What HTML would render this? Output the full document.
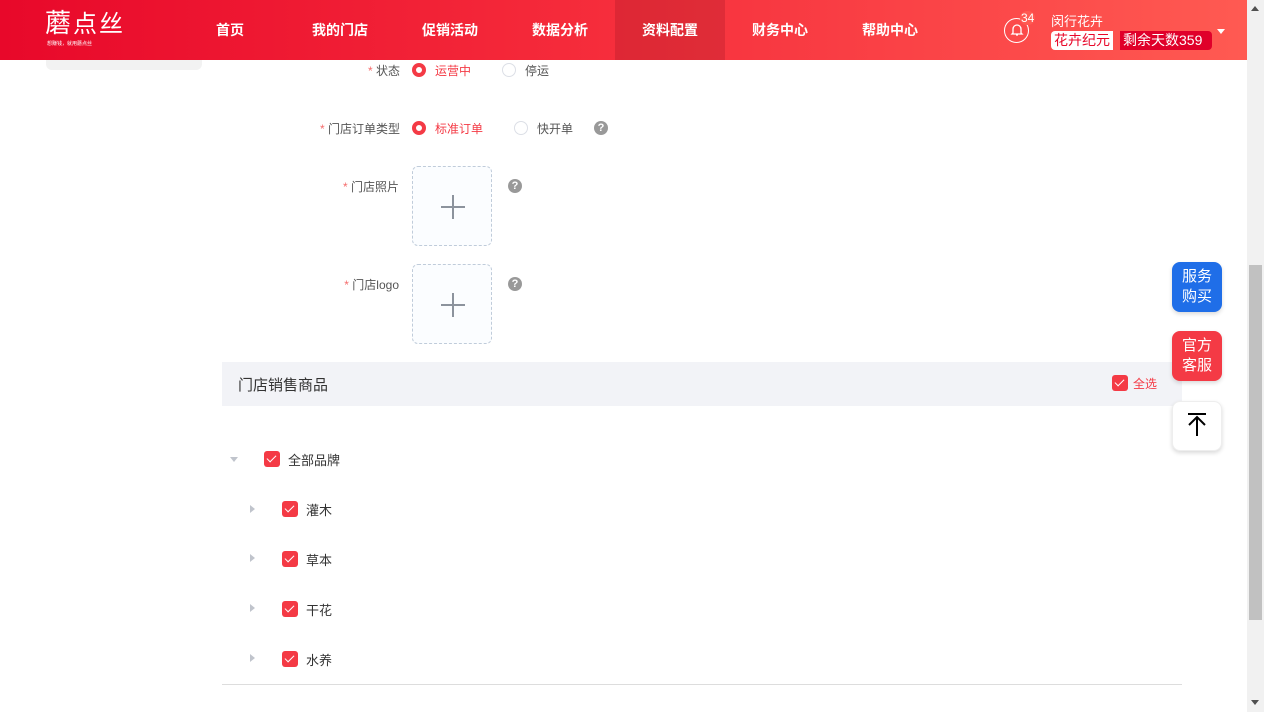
<!DOCTYPE html><html><head><meta charset="utf-8"><style>
*{margin:0;padding:0;box-sizing:border-box}
body{width:1264px;height:712px;overflow:hidden;background:#fff;font-family:"Liberation Sans","Noto Sans CJK SC",sans-serif;position:relative;color:#333}
.hd{position:absolute;left:0;top:0;width:1247px;height:60px;background:linear-gradient(90deg,#e8082a,#f52a3a 45%,#ff5a52)}
.nav{position:absolute;top:0;height:60px;line-height:60px;color:#fff;font-weight:bold;font-size:14px;text-align:center}
.abs{position:absolute}
.lbl{position:absolute;font-size:12px;color:#555;text-align:right;width:120px}
.lbl b{color:#f56c6c;font-weight:normal}
.rad{position:absolute;width:14px;height:14px;border-radius:50%}
.on{background:#fff;border:4px solid #f43a45}
.off{border:1px solid #dcdfe6;background:#fff}
.t12{position:absolute;font-size:12px}
.q{position:absolute;width:14px;height:14px;border-radius:50%;background:#999;color:#fff;font-size:11px;font-weight:bold;text-align:center;line-height:14px}
.up{position:absolute;width:80px;height:80px;border:1px dashed #c0ccda;border-radius:6px;background:#fbfdff}
.up:before{content:"";position:absolute;left:28px;top:39px;width:24px;height:1.5px;background:#8c939d}
.up:after{content:"";position:absolute;left:39px;top:28px;width:1.5px;height:24px;background:#8c939d}
.cb{position:absolute;width:16px;height:16px;border-radius:3px;background:#f43a45}
.cb:after{content:"";position:absolute;left:5px;top:2px;width:4px;height:8px;border:solid #fff;border-width:0 1.5px 1.5px 0;transform:rotate(45deg)}
.tri{position:absolute;width:0;height:0;border-top:4px solid transparent;border-bottom:4px solid transparent;border-left:5px solid #c0c4cc}
.tx{position:absolute;font-size:13px;color:#333}
.fb{position:absolute;left:1172px;width:50px;height:50px;border-radius:8px;color:#fff;font-size:15px;line-height:20px;text-align:center;padding-top:5px;box-shadow:0 2px 4px rgba(0,0,0,.15)}
</style></head><body>
<div class="hd"></div>
<div class="abs" style="left:45px;top:8px;color:#fff;font-size:26px;line-height:30px;letter-spacing:2px">蘑<span style="font-size:24px">点丝</span></div>
<div class="abs" style="left:47px;top:40px;color:#fff;font-size:5px;">想赚钱，就用蘑点丝</div>
<div class="nav" style="left:200px;width:60px">首页</div>
<div class="nav" style="left:300px;width:80px">我的门店</div>
<div class="nav" style="left:410px;width:80px">促销活动</div>
<div class="nav" style="left:520px;width:80px">数据分析</div>
<div class="nav" style="left:615px;width:110px;background:rgba(150,20,30,.25)">资料配置</div>
<div class="nav" style="left:740px;width:80px">财务中心</div>
<div class="nav" style="left:850px;width:80px">帮助中心</div>
<div class="abs" style="left:1004px;top:18px;width:25px;height:25px;border:1.5px solid #fff;border-radius:50%"></div>
<svg class="abs" style="left:1009px;top:22px" width="16" height="16" viewBox="0 0 16 16"><path d="M4 11V7a4 4 0 0 1 8 0v4l1 1H3z M7 13h2" fill="none" stroke="#fff" stroke-width="1.3"/></svg>
<div class="abs" style="left:1020px;top:11px;font-size:12px;color:#fff;background:#ff5a52;border-radius:8px;padding:0 1px">34</div>
<div class="abs" style="left:1051px;top:11px;color:#fff;font-size:13px">闵行花卉</div>
<div class="abs" style="left:1051px;top:31px;height:19px;background:#fff;color:#e8082a;font-size:14px;line-height:19px;padding:0 3px;border-radius:4px 0 0 4px">花卉纪元</div>
<div class="abs" style="left:1120px;top:31px;height:19px;background:#e0002a;color:#fff;font-size:14px;line-height:19px;padding:0 3px;border-radius:0 4px 4px 0;width:92px">剩余天数359</div>
<div class="abs" style="left:1217px;top:29px;border-left:4px solid transparent;border-right:4px solid transparent;border-top:5px solid #fff"></div>
<div class="abs" style="left:46px;top:60px;width:156px;height:10px;background:#f2f2f2;border-radius:0 0 6px 6px"></div>

<div class="lbl" style="left:280px;top:62px"><b>*</b> 状态</div>
<div class="rad on" style="left:412px;top:63px"></div><div class="t12" style="left:435px;top:62px;color:#f43a45">运营中</div>
<div class="rad off" style="left:502px;top:63px"></div><div class="t12" style="left:525px;top:62px;color:#555">停运</div>
<div class="lbl" style="left:280px;top:120px"><b>*</b> 门店订单类型</div>
<div class="rad on" style="left:412px;top:121px"></div><div class="t12" style="left:435px;top:120px;color:#f43a45">标准订单</div>
<div class="rad off" style="left:514px;top:121px"></div><div class="t12" style="left:537px;top:120px;color:#555">快开单</div>
<div class="q" style="left:594px;top:121px">?</div>
<div class="lbl" style="left:279px;top:178px"><b>*</b> 门店照片</div>
<div class="up" style="left:412px;top:166px"></div><div class="q" style="left:508px;top:179px">?</div>
<div class="lbl" style="left:279px;top:276px"><b>*</b> 门店logo</div>
<div class="up" style="left:412px;top:264px"></div><div class="q" style="left:508px;top:277px">?</div>

<div class="abs" style="left:222px;top:362px;width:960px;height:44px;background:#f2f3f7"></div>
<div class="abs" style="left:238px;top:374px;font-size:15px;color:#333">门店销售商品</div>
<div class="cb" style="left:1112px;top:375px"></div><div class="t12" style="left:1133px;top:375px;color:#f43a45">全选</div>

<div class="abs" style="left:230px;top:457px;border-left:4px solid transparent;border-right:4px solid transparent;border-top:5px solid #c0c4cc"></div>
<div class="cb" style="left:264px;top:451px"></div><div class="tx" style="left:288px;top:450px">全部品牌</div>
<div class="tri" style="left:250px;top:505px"></div><div class="cb" style="left:282px;top:501px"></div><div class="tx" style="left:306px;top:500px">灌木</div>
<div class="tri" style="left:250px;top:554px"></div><div class="cb" style="left:282px;top:551px"></div><div class="tx" style="left:306px;top:550px">草本</div>
<div class="tri" style="left:250px;top:604px"></div><div class="cb" style="left:282px;top:601px"></div><div class="tx" style="left:306px;top:600px">干花</div>
<div class="tri" style="left:250px;top:654px"></div><div class="cb" style="left:282px;top:651px"></div><div class="tx" style="left:306px;top:650px">水养</div>
<div class="abs" style="left:222px;top:684px;width:960px;height:1px;background:#ddd"></div>

<div class="fb" style="top:262px;background:#1f6ee8">服务<br>购买</div>
<div class="fb" style="top:331px;background:#f43a45">官方<br>客服</div>
<div class="fb" style="top:401px;background:#fff;border:1px solid #eee;padding-top:10px">
<svg width="22" height="26" viewBox="0 0 22 26"><path d="M2 2h18M11 24V5M3 13l8-8 8 8" fill="none" stroke="#000" stroke-width="2"/></svg></div>

<div class="abs" style="left:1247px;top:0;width:17px;height:712px;background:#f1f1f1"></div>
<div class="abs" style="left:1249px;top:265px;width:13px;height:355px;background:#c1c1c1"></div>
<div class="abs" style="left:1251px;top:6px;border-left:4px solid transparent;border-right:4px solid transparent;border-bottom:5px solid #505050"></div>
<div class="abs" style="left:1251px;top:700px;border-left:4px solid transparent;border-right:4px solid transparent;border-top:5px solid #505050"></div>
</body></html>
